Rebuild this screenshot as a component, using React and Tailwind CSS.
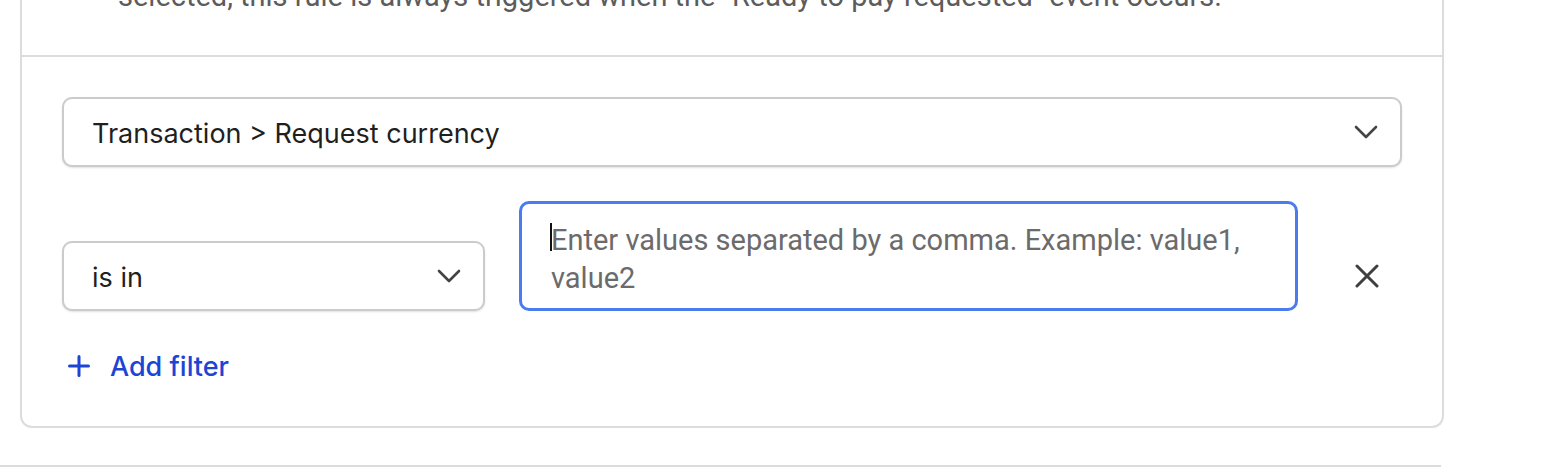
import React from "react";

const Chevron = () => (
  <svg width="24" height="14" viewBox="0 0 24 14" fill="none" className="shrink-0">
    <path d="M2 2l10 10L22 2" stroke="#444444" strokeWidth="2.6" strokeLinecap="round" strokeLinejoin="round" />
  </svg>
);

const SelectBox = ({ label, className }) => (
  <div
    className={`flex items-center justify-between h-[70px] pl-[28px] pr-[22px] rounded-[10px] border-2 border-[#cbcbcb] bg-white shadow-[0_1px_2px_rgba(0,0,0,0.12)] ${className}`}
  >
    <span className="pt-[5px] text-[27px] text-[#1f1f1f] font-['Inter',sans-serif]">{label}</span>
    <Chevron />
  </div>
);

export default function App() {
  return (
    <div className="w-[1556px] h-[468px] bg-white overflow-hidden">
      <div className="ml-[20px] w-[1424px] border-2 border-t-0 border-[#dcdcdc] rounded-b-[12px]">
        <div className="flex items-end pl-[96px] h-[57px] pb-[41px] border-b-2 border-[#dcdcdc]">
          <p className="shrink-0 text-[29px] leading-[36px] text-[#5c5c5c] font-['Roboto',sans-serif] whitespace-nowrap">
            selected, this rule is always triggered when the "Ready to pay requested" event occurs.
          </p>
        </div>
        <div className="px-[40px] pt-[40px] pb-[42px]">
          <SelectBox label="Transaction > Request currency" className="w-full" />
          <div className="flex items-end gap-[34px] mt-[34px]">
            <SelectBox label="is in" className="w-[423px] shrink-0" />
            <div className="flex-1 h-[110px] rounded-[10px] border-[3px] border-[#4a7cf0] pl-[29px] pr-[20px] pt-[17px] relative">
              <span className="absolute left-[28px] top-[19px] w-[2px] h-[28px] bg-[#111]" />
              <p className="text-[29px] leading-[38px] text-[#6b6b6b] font-['Roboto',sans-serif]">
                Enter values separated by a comma. Example: value1, value2
              </p>
            </div>
            <div className="w-[70px] h-[70px] shrink-0 flex items-center justify-center">
              <svg width="24" height="24" viewBox="0 0 24 24" fill="none">
                <path d="M2 2l20 20M22 2L2 22" stroke="#3f3f3f" strokeWidth="3" strokeLinecap="round" />
              </svg>
            </div>
          </div>
          <div className="flex items-center gap-[20px] mt-[37px] pl-[6px] h-[36px]">
            <svg width="22" height="22" viewBox="0 0 22 22" fill="none">
              <path d="M11 1.5v19M1.5 11h19" stroke="#1d45d3" strokeWidth="3" strokeLinecap="round" />
            </svg>
            <span className="pt-[2px] text-[27px] font-medium text-[#1d45d3] font-['Inter',sans-serif]">Add filter</span>
          </div>
        </div>
      </div>
      <div className="mt-[37px] w-[1441px] h-[2px] bg-[#dcdcdc]" />
    </div>
  );
}
